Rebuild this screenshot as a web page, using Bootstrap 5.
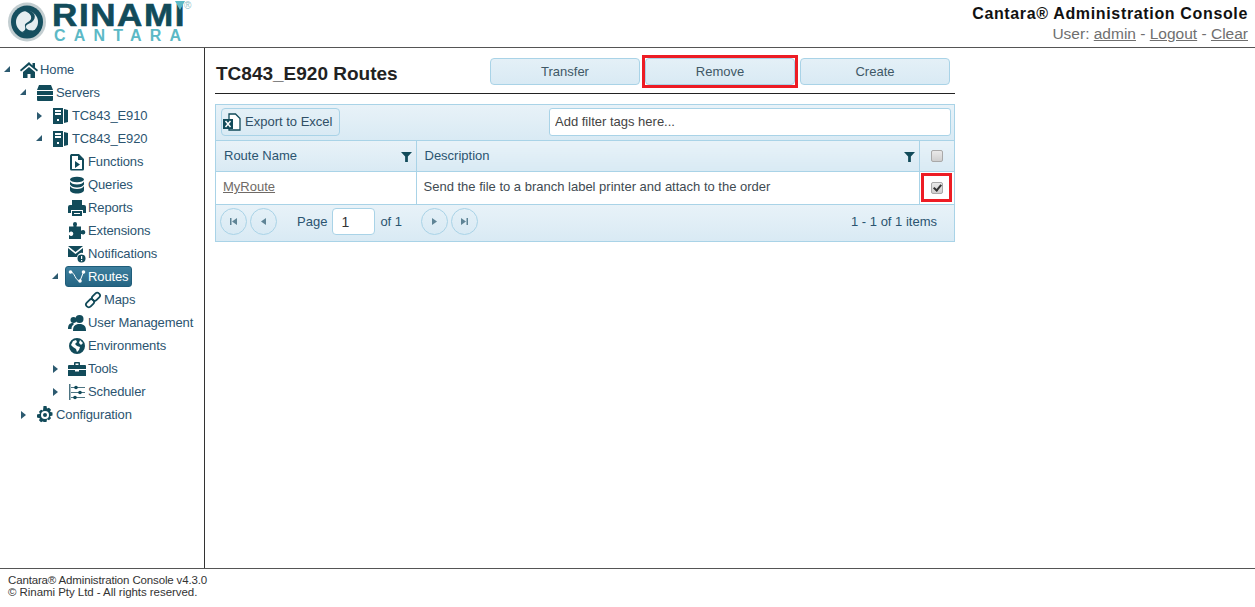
<!DOCTYPE html>
<html lang="en">
<head>
  <meta charset="UTF-8" />
  <title>Cantara Administration Console</title>
  <link href="https://cdn.jsdelivr.net/npm/bootstrap@5.3.0/dist/css/bootstrap.min.css" rel="stylesheet">
  <style>
    html, body { height: 100%; }
    body { font-family: "Liberation Sans", Arial, sans-serif; font-size: 13px; color: #2b5470; background: #fff; overflow: hidden; }
    a { color: #6f6f6f; }

    /* header */
    .app-header { height: 48px; border-bottom: 1px solid #555; padding: 0 7px 0 8px; }
    .logo-mark { width: 38px; height: 40px; margin-top: 2px; flex: none; }
    .logo-words { margin-left: 6px; width: 138px; position: relative; }
    .logo-rinami { font-size: 31px; line-height: 25px; font-weight: 700; color: #124b5a; letter-spacing: 1.4px; height: 26px; margin-top: 3px; -webkit-text-stroke: .6px #124b5a; transform: scaleX(1.13); transform-origin: left center; }
    .logo-cantara { font-size: 16px; line-height: 14px; font-weight: 700; color: #5cb9c6; letter-spacing: 8.2px; margin-left: 2px; }
    .logo-reg { position: absolute; left: 132px; top: 1px; font-size: 10px; line-height: 10px; color: #8fbfc9; }
    .logo-tip { position: absolute; left: 123px; top: 1px; width: 10px; height: 9px; }
    .console-title { font-size: 16px; line-height: 18px; font-weight: 700; color: #111; letter-spacing: .65px; margin-top: 5px; }
    .console-user { font-size: 15.5px; line-height: 20px; color: #6f6f6f; margin-top: 1px; }

    /* sidebar tree */
    .app-body { height: 520px; }
    .side-tree { width: 205px; flex: none; border-right: 1px solid #333; padding: 10px 0 0 3px; letter-spacing: -.12px; }
    .tree-row { height: 23px; display: flex; align-items: center; white-space: nowrap; }
    .lvl-1 { padding-left: 16px; }
    .lvl-2 { padding-left: 32px; }
    .lvl-3 { padding-left: 48px; }
    .lvl-4 { padding-left: 64px; }
    .tree-caret { width: 16px; height: 10px; flex: none; }
    .tree-caret svg { display: block; }
    .tree-item { display: flex; align-items: center; height: 20px; }
    .tree-icon { width: 18px; height: 18px; flex: none; margin-left: 1px; margin-right: 1px; fill: #124b5a; }
    .tree-active { background: linear-gradient(#3d7f9e, #256583); color: #fff; border-radius: 3px; margin-left: -2px; padding-left: 1px; padding-right: 3px; border: 1px solid #1f5d7a; height: 21px; }
    .tree-active .tree-icon { fill: #fff; }
    .tree-label { padding-left: 1px; }

    /* main */
    .main-pane { padding: 10px 0 0 10px; width: 751px; }
    .title-row { width: 740px; height: 36px; border-bottom: 1px solid #222; }
    .page-title { font-size: 19px; line-height: 31px; font-weight: 700; color: #222; margin: 0 0 0 1px; }
    .action-btn { width: 150px; height: 27px; padding: 0; font-size: 13px; line-height: 25px; color: #3f5866; background: linear-gradient(#e4f0f7, #d9eaf4); border: 1px solid #a9d3e7; border-radius: 4px; }
    .action-btn:hover { background: #d9eaf4; color: #3f5866; border-color: #a9d3e7; }
    .title-btns { gap: 5px; margin-right: 5px; align-items: flex-start; }
    .red-mark { border: 3px solid #ed1c24; margin: -3px; display: flex; }

    .route-grid { width: 740px; margin-top: 10px; border: 1px solid #a9d3e7; }
    .grid-bar { height: 36px; padding: 3px 0 0 5px; background: linear-gradient(#e8f2f8, #d9eaf4); border-bottom: 1px solid #a9d3e7; }
    .excel-btn { height: 28px; width: 119px; padding: 0 0 0 1px; background: linear-gradient(#e4f0f7, #d9eaf4); border: 1px solid #a9d3e7; border-radius: 4px; color: #2f4f66; font-size: 13px; display: flex; align-items: center; white-space: nowrap; }
    .excel-btn svg { margin-right: 4px; }
    .tag-input { width: 402px; height: 28px; margin-left: 209px; padding: 0 5px 2px; border: 1px solid #a9d3e7; border-radius: 3px; background: #fff; color: #444; font-size: 13px; line-height: 24px; }
    .tag-input::placeholder { color: #444; opacity: 1; }

    .route-table { width: 100%; margin: 0; table-layout: fixed; border-collapse: collapse; }
    .route-table th { height: 30px; padding: 0 8px; font-weight: 400; color: #2b5470; background: linear-gradient(#e8f2f8, #d9eaf4); border-bottom: 1px solid #a9d3e7; border-right: 1px solid #a9d3e7; font-size: 13px; }
    .route-table td { height: 33px; padding: 0 7px 1px; color: #3f4b52; border-bottom: 1px solid #a9d3e7; border-right: 1px solid #a9d3e7; font-size: 13px; }
    .route-table th:last-child, .route-table td:last-child { border-right: 0; text-align: center; padding: 0; }
    .col-name { width: 200px; }
    .col-check { width: 35px; }
    .head-cell { display: flex; justify-content: space-between; align-items: center; margin-right: -4px; }
    .head-cell svg { margin-top: 2px; }
    .route-link { color: #6f6a66; }
    .fake-check { appearance: none; width: 12px; height: 12px; display: inline-block; margin: 4px 0 0; vertical-align: top; border: 1px solid #a9a9a9; border-radius: 2px; background: linear-gradient(#e9e9e9, #cfcfcf); position: relative; }
    .fake-check:checked::after { content: ""; position: absolute; left: 3px; top: 0; width: 5px; height: 8px; border: solid #333; border-width: 0 2px 2px 0; transform: rotate(40deg); }
    .check-mark { display: inline-block; width: 31px; height: 29px; border: 3px solid #ed1c24; padding-top: 2px; vertical-align: middle; }

    .grid-pager { height: 36px; padding: 0 16px 2px 4px; background: linear-gradient(#e8f2f8, #d9eaf4); color: #2b5470; }
    .page-btn { width: 27px; height: 27px; border-radius: 50%; padding: 0; border: 1px solid #a9d3e7; background: linear-gradient(#e4f0f7, #d9eaf4); display: inline-flex; align-items: center; justify-content: center; }
    .page-btn + .page-btn { margin-left: 3px; }
    .page-input { width: 43px; height: 27px; border: 1px solid #a9d3e7; border-radius: 4px; padding: 0 8px; margin: 0 5px; color: #333; font-size: 14px; background: #fff; }
    .page-word { margin-left: 20px; margin-right: 19px; display: flex; align-items: center; font-size: 13px; }
    .item-count { margin-left: auto; margin-right: 1px; font-size: 13px; }

    /* footer */
    .app-footer { border-top: 1px solid #555; padding: 5px 0 0 8px; font-size: 11.5px; line-height: 12px; color: #333; letter-spacing: -.05px; }
    .foot-first { letter-spacing: -.15px; }
  </style>
</head>
<body>
  <!-- Header -->
  <header class="app-header d-flex justify-content-between">
    <div class="d-flex">
      <svg class="logo-mark" viewBox="0 0 38 40">
        <ellipse cx="19" cy="20" rx="19" ry="19.500" fill="#c3ced1"/>
        <ellipse cx="19" cy="20" rx="16" ry="16.500" fill="#164f5f"/>
        <circle cx="19" cy="20" r="11" fill="#e6eef0"/>
        <path d="M17 9c9-2 13 6 7 11-3 2-6 2-6 5 0 3 5 4 10 3-4 5-10 5-14 2 3-1 4-3 3-6-1-3 5-4 6-7 1-4-2-6-6-8z" fill="#164f5f"/>
      </svg>
      <div class="logo-words">
        <div class="logo-rinami">RINAMI</div>
        <div class="logo-cantara">CANTARA</div>
        <svg class="logo-tip" viewBox="0 0 10 9"><path d="M0 0h10L5 9z" fill="#5cb9c6"/></svg>
        <span class="logo-reg">®</span>
      </div>
    </div>
    <div class="text-end">
      <div class="console-title">Cantara® Administration Console</div>
      <div class="console-user">User: <a href="#">admin</a> - <a href="#">Logout</a> - <a href="#">Clear</a></div>
    </div>
  </header>

  <div class="app-body d-flex">
    <!-- Tree -->
    <nav class="side-tree">
      <div class="tree-row">
        <span class="tree-caret"><svg width="8" height="8"><path d="M7 1v6H1z" fill="#2c5a70"/></svg></span>
        <span class="tree-item"><svg class="tree-icon" viewBox="0 0 18 18"><path d="M9 1 0 9l1 1.500L9 4l8 6.500L18 9l-3-2.500V2h-2.500v2.500zM3 11v6h4.500v-4h3v4H15v-6L9 6z"/></svg><span class="tree-label">Home</span></span>
      </div>
      <div class="tree-row lvl-1">
        <span class="tree-caret"><svg width="8" height="8"><path d="M7 1v6H1z" fill="#2c5a70"/></svg></span>
        <span class="tree-item"><svg class="tree-icon" viewBox="0 0 18 18"><path d="M3 1h12l2 5H1zM1 7h16v4H1zM1 12h16v4a1 1 0 0 1-1 1H2a1 1 0 0 1-1-1z"/></svg><span class="tree-label">Servers</span></span>
      </div>
      <div class="tree-row lvl-2">
        <span class="tree-caret"><svg width="8" height="10"><path d="M2 1l5 4-5 4z" fill="#2c5a70"/></svg></span>
        <span class="tree-item"><svg class="tree-icon" viewBox="0 0 18 18"><path fill-rule="evenodd" d="M1 1h10v16H1zM3 3v2h6V3zM3 6v2h6V6zM5 12v2h2v-2zM12 2l4 1v12l-4 1z"/></svg><span class="tree-label">TC843_E910</span></span>
      </div>
      <div class="tree-row lvl-2">
        <span class="tree-caret"><svg width="8" height="8"><path d="M7 1v6H1z" fill="#2c5a70"/></svg></span>
        <span class="tree-item"><svg class="tree-icon" viewBox="0 0 18 18"><path fill-rule="evenodd" d="M1 1h10v16H1zM3 3v2h6V3zM3 6v2h6V6zM5 12v2h2v-2zM12 2l4 1v12l-4 1z"/></svg><span class="tree-label">TC843_E920</span></span>
      </div>
      <div class="tree-row lvl-3">
        <span class="tree-caret"></span>
        <span class="tree-item"><svg class="tree-icon" viewBox="0 0 18 18"><path fill-rule="evenodd" d="M3 1h8l5 5v10a1.500 1.500 0 0 1-1.500 1.500h-11A1.500 1.500 0 0 1 2 16V2.500zM4 3v13h10V7h-4V3zM7 8l5 3.500L7 15z"/></svg><span class="tree-label">Functions</span></span>
      </div>
      <div class="tree-row lvl-3">
        <span class="tree-caret"></span>
        <span class="tree-item"><svg class="tree-icon" viewBox="0 0 18 18"><ellipse cx="9" cy="3.500" rx="7" ry="2.800"/><path d="M2 5.500c1 2 3.500 3 7 3s6-1 7-3v3c-1 2-3.500 3-7 3s-6-1-7-3zM2 10c1 2 3.500 3 7 3s6-1 7-3v4c0 2-3 3.500-7 3.500S2 16 2 14z"/></svg><span class="tree-label">Queries</span></span>
      </div>
      <div class="tree-row lvl-3">
        <span class="tree-caret"></span>
        <span class="tree-item"><svg class="tree-icon" viewBox="0 0 18 18"><path fill-rule="evenodd" d="M4 1h10v5H4zM2 6h14a2 2 0 0 1 2 2v6h-3v-3H3v3H0V8a2 2 0 0 1 2-2zM4 12h10v5H4zM6 14v1h6v-1z"/></svg><span class="tree-label">Reports</span></span>
      </div>
      <div class="tree-row lvl-3">
        <span class="tree-caret"></span>
        <span class="tree-item"><svg class="tree-icon" viewBox="0 0 18 18"><path d="M5 2a2 2 0 0 1 4 0c0 1-.5 1.500-.5 2.500H13v4c1 0 1.500-.5 2.500-.5a2.300 2.300 0 0 1 0 4.500c-1 0-1.500-.5-2.500-.5v5H1v-4c1 .5 1.500 1 2.500 1a2.300 2.300 0 0 0 0-4.500c-1 0-1.500.5-2.500 1v-6h4.500C5.500 3.500 5 3 5 2z"/></svg><span class="tree-label">Extensions</span></span>
      </div>
      <div class="tree-row lvl-3">
        <span class="tree-caret"></span>
        <span class="tree-item"><svg class="tree-icon" viewBox="0 0 18 18"><path d="M0 1h15L7.500 7zM0 3v9h9a5 5 0 0 1 6-4V3L7.500 9z"/><circle cx="13.500" cy="13.500" r="4"/><path d="M13 11h1.200v3H13zM13 15h1.200v1.200H13z" fill="#fff"/></svg><span class="tree-label">Notifications</span></span>
      </div>
      <div class="tree-row lvl-3">
        <span class="tree-caret"><svg width="8" height="8"><path d="M7 1v6H1z" fill="#2c5a70"/></svg></span>
        <span class="tree-item tree-active"><svg class="tree-icon" viewBox="0 0 18 18"><path d="M2.500 4C7 4 7 13 12 13L15.500 4" fill="none" stroke="#fff" stroke-width="1"/><circle cx="2.500" cy="4" r="1.800"/><circle cx="15.500" cy="4" r="1.800"/><circle cx="12" cy="13" r="1.800"/></svg><span class="tree-label">Routes</span></span>
      </div>
      <div class="tree-row lvl-4">
        <span class="tree-caret"></span>
        <span class="tree-item"><svg class="tree-icon" viewBox="0 0 18 18"><g fill="none" stroke="#124b5a" stroke-width="1.800"><rect x="1.500" y="9.500" width="9" height="5.500" rx="2.700" transform="rotate(-45 6 12.200)"/><rect x="7.500" y="3" width="9" height="5.500" rx="2.700" transform="rotate(-45 12 5.800)"/></g></svg><span class="tree-label">Maps</span></span>
      </div>
      <div class="tree-row lvl-3">
        <span class="tree-caret"></span>
        <span class="tree-item"><svg class="tree-icon" viewBox="0 0 18 18"><circle cx="11.500" cy="5" r="4"/><path d="M5 17c0-5 2-7 6.500-7S18 12 18 17z"/><circle cx="5.500" cy="6" r="3"/><path d="M0 15c0-4 1.500-6 5-6l1 1c-2 1.500-2.500 3-2.500 5z"/></svg><span class="tree-label">User Management</span></span>
      </div>
      <div class="tree-row lvl-3">
        <span class="tree-caret"></span>
        <span class="tree-item"><svg class="tree-icon" viewBox="0 0 18 18"><path fill-rule="evenodd" d="M9 1a8 8 0 1 0 0 16A8 8 0 0 0 9 1zM5 4l3-1 1 2-2 2 2 2 3 1-1 3-2 2-1-3-3-2-2-2zM12 3l3 3-2 2-2-2z"/></svg><span class="tree-label">Environments</span></span>
      </div>
      <div class="tree-row lvl-3">
        <span class="tree-caret"><svg width="8" height="10"><path d="M2 1l5 4-5 4z" fill="#2c5a70"/></svg></span>
        <span class="tree-item"><svg class="tree-icon" viewBox="0 0 18 18"><path fill-rule="evenodd" d="M6 3a1 1 0 0 1 1-1h4a1 1 0 0 1 1 1v2h5a1 1 0 0 1 1 1v3H0V6a1 1 0 0 1 1-1h5zM7.500 3.500V5h3V3.500zM0 10h7v1.500h4V10h7v6H0z"/></svg><span class="tree-label">Tools</span></span>
      </div>
      <div class="tree-row lvl-3">
        <span class="tree-caret"><svg width="8" height="10"><path d="M2 1l5 4-5 4z" fill="#2c5a70"/></svg></span>
        <span class="tree-item"><svg class="tree-icon" viewBox="0 0 18 18"><path d="M1 1h1.500v16H1zM3 4h14v1H3zM3 9h14v1H3zM3 14h14v1H3z" fill="#4d7482"/><circle cx="8" cy="4.500" r="1.800"/><circle cx="12" cy="9.500" r="1.800"/><circle cx="7" cy="14.500" r="1.800"/></svg><span class="tree-label">Scheduler</span></span>
      </div>
      <div class="tree-row lvl-1">
        <span class="tree-caret"><svg width="8" height="10"><path d="M2 1l5 4-5 4z" fill="#2c5a70"/></svg></span>
        <span class="tree-item"><svg class="tree-icon" viewBox="0 0 18 18"><path fill-rule="evenodd" d="M7.500 0h3l.5 2.500 2-.8 2 2-1 2 2.500.8v3l-2.500.8 1 2-2 2-2-1-.5 2.700h-3L7 15.300l-2 1-2-2 1-2L1 11.500v-3l3-.8-1-2 2-2 2 .8zM9 5a4 4 0 1 0 0 8 4 4 0 0 0 0-8zM9 7a2 2 0 1 1 0 4 2 2 0 0 1 0-4z"/></svg><span class="tree-label">Configuration</span></span>
      </div>
    </nav>

    <!-- Main -->
    <main class="main-pane">
      <div class="title-row d-flex justify-content-between">
        <h1 class="page-title">TC843_E920 Routes</h1>
        <div class="title-btns d-flex">
          <button class="btn action-btn">Transfer</button>
          <span class="red-mark"><button class="btn action-btn">Remove</button></span>
          <button class="btn action-btn">Create</button>
        </div>
      </div>

      <div class="route-grid">
        <div class="grid-bar d-flex align-items-start">
          <button class="btn excel-btn">
            <svg width="18" height="20" viewBox="0 0 18 20"><path d="M6 2h6.500L17 6.500V18H6z" fill="#fff" stroke="#124b5a" stroke-width="1.300"/><rect x="0" y="7" width="10" height="10" fill="#124b5a"/><path d="M2.500 9l5 6M7.500 9l-5 6" stroke="#fff" stroke-width="1.500"/></svg>
            Export to Excel
          </button>
          <input class="tag-input" type="text" placeholder="Add filter tags here...">
        </div>
        <table class="route-table">
          <colgroup><col class="col-name"><col><col class="col-check"></colgroup>
          <thead>
            <tr>
              <th><div class="head-cell">Route Name <svg width="11" height="11" viewBox="0 0 12 12"><path d="M0 1h12L7.500 6v6h-3V6z" fill="#124b5a"/></svg></div></th>
              <th><div class="head-cell">Description <svg width="11" height="11" viewBox="0 0 12 12"><path d="M0 1h12L7.500 6v6h-3V6z" fill="#124b5a"/></svg></div></th>
              <th><input class="fake-check" type="checkbox"></th>
            </tr>
          </thead>
          <tbody>
            <tr>
              <td><a class="route-link" href="#">MyRoute</a></td>
              <td>Send the file to a branch label printer and attach to the order</td>
              <td><span class="check-mark"><input class="fake-check" type="checkbox" checked></span></td>
            </tr>
          </tbody>
        </table>
        <div class="grid-pager d-flex align-items-center">
          <button class="page-btn"><svg width="9" height="9"><path d="M1 1h1.500v7H1zM8 1v7L3 4.500z" fill="#5f8496"/></svg></button>
          <button class="page-btn"><svg width="9" height="9"><path d="M7 1v7L2 4.500z" fill="#5f8496"/></svg></button>
          <div class="page-word">Page <input class="page-input" type="text" value="1"> of 1</div>
          <button class="page-btn"><svg width="9" height="9"><path d="M2 1v7l5-3.500z" fill="#5f8496"/></svg></button>
          <button class="page-btn"><svg width="9" height="9"><path d="M1 1v7l5-3.500zM6.500 1H8v7H6.500z" fill="#5f8496"/></svg></button>
          <span class="item-count">1 - 1 of 1 items</span>
        </div>
      </div>
    </main>
  </div>

  <footer class="app-footer">
    <span class="foot-first">Cantara® Administration Console v4.3.0</span><br>
    © Rinami Pty Ltd - All rights reserved.
  </footer>

  <script src="https://cdn.jsdelivr.net/npm/bootstrap@5.3.0/dist/js/bootstrap.bundle.min.js"></script>
</body>
</html>
